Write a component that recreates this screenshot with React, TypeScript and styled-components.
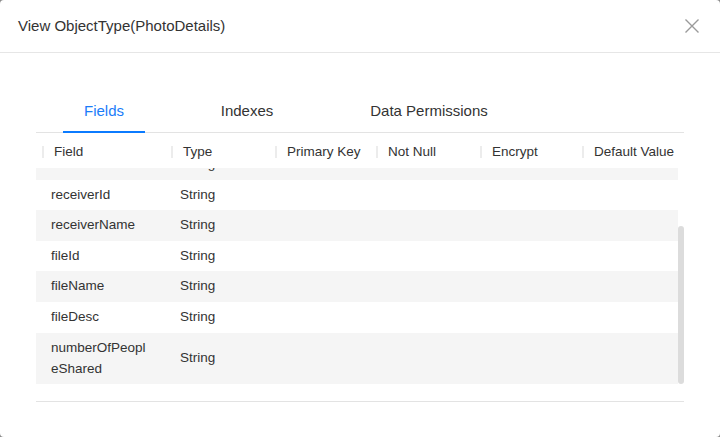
import React, { useLayoutEffect, useRef, useState } from "react";
import styled, { createGlobalStyle } from "styled-components";

const GlobalStyle = createGlobalStyle`
  html, body {
    margin: 0;
    padding: 0;
    background: #8a8a8a;
  }
  body {
    font-family: "Liberation Sans", Arial, sans-serif;
    color: #333;
  }
  * { box-sizing: border-box; }
`;

const Modal = styled.div`
  width: 720px;
  height: 437px;
  background: #fff;
  border-radius: 4px;
  overflow: hidden;
  display: flex;
  flex-direction: column;
`;

const Header = styled.div`
  height: 53px;
  flex: none;
  display: flex;
  align-items: center;
  justify-content: space-between;
  padding: 0 20px 1px 18px;
  border-bottom: 1px solid #e6e6e6;
`;

const Title = styled.div`
  font-size: 15px;
  line-height: 22px;
  color: #333;
`;

const CloseButton = styled.button`
  width: 16px;
  height: 16px;
  padding: 0;
  border: none;
  background: none;
  display: flex;
  align-items: center;
  justify-content: center;
  cursor: pointer;
`;

const Body = styled.div`
  padding: 35px 36px 0 36px;
  display: flex;
  flex-direction: column;
`;

const TabNav = styled.div`
  display: flex;
  padding-left: 27px;
  gap: 55px;
  border-bottom: 1px solid #e3e3e3;
`;

const Tab = styled.div<{ $active?: boolean; $w: number }>`
  position: relative;
  width: ${(p) => p.$w}px;
  text-align: center;
  padding: 12px 0 10px;
  font-size: 15px;
  line-height: 22px;
  color: ${(p) => (p.$active ? "#1a7cf9" : "#333")};
  cursor: pointer;
  &::after {
    content: "";
    display: ${(p) => (p.$active ? "block" : "none")};
    position: absolute;
    left: 0;
    right: 0;
    bottom: -1px;
    height: 2px;
    background: #0b7bff;
  }
`;

const TableWrap = styled.div`
  padding-bottom: 17px;
  border-bottom: 1px solid #e3e3e3;
`;

const cols = "129px 104px 101px 104px 102px 1fr";

const HeadRow = styled.div`
  display: grid;
  grid-template-columns: ${cols};
  padding: 2px 0 0 7px;
  height: 35px;
  align-items: center;
`;

const HeadCell = styled.div`
  position: relative;
  padding-left: 11px;
  font-size: 13.5px;
  line-height: 20px;
  color: #333;
  white-space: nowrap;
  &::before {
    content: "";
    position: absolute;
    left: -1px;
    top: 50%;
    transform: translateY(-50%);
    width: 2px;
    height: 12px;
    background: #ececec;
  }
`;

const ScrollArea = styled.div`
  display: flex;
  height: 216px;
`;

const Viewport = styled.div`
  flex: 1;
  min-width: 0;
  overflow-y: scroll;
  scrollbar-width: none;
  &::-webkit-scrollbar {
    display: none;
  }
`;

const Track = styled.div`
  position: relative;
  width: 6px;
  flex: none;
`;

const Thumb = styled.div`
  position: absolute;
  left: 0;
  width: 6px;
  background: #dcdcdc;
  border-radius: 3px;
`;

const Row = styled.div<{ $striped: boolean }>`
  display: grid;
  grid-template-columns: ${cols};
  padding-left: 7px;
  align-items: center;
  background: ${(p) => (p.$striped ? "#f5f5f5" : "#fff")};
`;

const Cell = styled.div`
  padding: 3.9px 22px 5.7px 8px;
  font-size: 13.5px;
  line-height: 21px;
  color: #333;
  word-break: break-all;
`;

const CloseIcon = () => (
  <svg width="16" height="16" viewBox="0 0 16 16">
    <path d="M1.5 1.5 L14.5 14.5 M14.5 1.5 L1.5 14.5" stroke="#9a9a9a" strokeWidth="1.4" fill="none" />
  </svg>
);

const columns = ["Field", "Type", "Primary Key", "Not Null", "Encrypt", "Default Value"];

const fields = [
  "photoId",
  "senderId",
  "senderName",
  "receiverId",
  "receiverName",
  "fileId",
  "fileName",
  "fileDesc",
  "numberOfPeopleShared",
];

export default function App() {
  const [tab, setTab] = useState(0);
  const [thumb, setThumb] = useState({ top: 0, height: 0 });
  const scrollRef = useRef<HTMLDivElement>(null);

  const updateThumb = () => {
    const el = scrollRef.current;
    if (!el) return;
    const ratio = el.clientHeight / el.scrollHeight;
    const height = ratio >= 1 ? 0 : el.clientHeight * ratio;
    const maxScroll = el.scrollHeight - el.clientHeight;
    const top = maxScroll > 0 ? (el.scrollTop / maxScroll) * (el.clientHeight - height) : 0;
    setThumb({ top, height });
  };

  useLayoutEffect(() => {
    const el = scrollRef.current;
    if (el) el.scrollTop = el.scrollHeight;
    updateThumb();
  }, []);

  const tabs = [
    { label: "Fields", w: 82 },
    { label: "Indexes", w: 94 },
    { label: "Data Permissions", w: 160 },
  ];

  return (
    <>
      <GlobalStyle />
      <Modal>
        <Header>
          <Title>View ObjectType(PhotoDetails)</Title>
          <CloseButton aria-label="Close">
            <CloseIcon />
          </CloseButton>
        </Header>
        <Body>
          <TabNav>
            {tabs.map((t, i) => (
              <Tab key={t.label} $w={t.w} $active={tab === i} onClick={() => setTab(i)}>
                {t.label}
              </Tab>
            ))}
          </TabNav>
          <TableWrap>
            <HeadRow>
              {columns.map((c) => (
                <HeadCell key={c}>{c}</HeadCell>
              ))}
            </HeadRow>
            <ScrollArea>
              <Viewport ref={scrollRef} onScroll={updateThumb}>
                {fields.map((f, i) => (
                  <Row key={f} $striped={i % 2 === 0}>
                    <Cell>{f}</Cell>
                    <Cell>String</Cell>
                    <Cell />
                    <Cell />
                    <Cell />
                    <Cell />
                  </Row>
                ))}
              </Viewport>
              <Track>
                {thumb.height > 0 && (
                  <Thumb style={{ top: thumb.top, height: thumb.height }} />
                )}
              </Track>
            </ScrollArea>
          </TableWrap>
        </Body>
      </Modal>
    </>
  );
}
